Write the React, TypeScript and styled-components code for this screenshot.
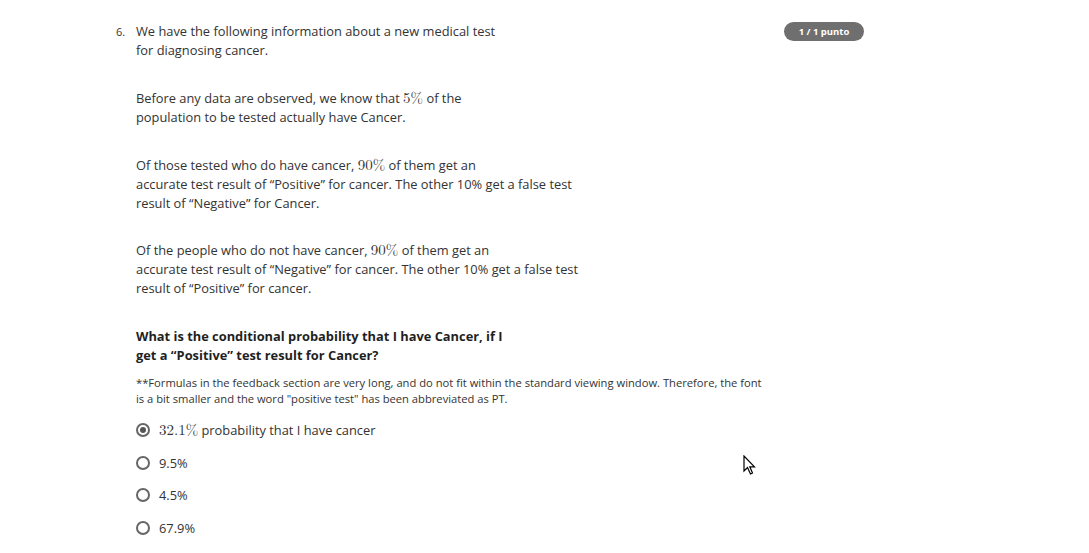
import React from "react";
import styled, { createGlobalStyle } from "styled-components";

const Global = createGlobalStyle`
  html, body { margin: 0; padding: 0; background: #fff; }
  body { font-family: "Open Sans", "DejaVu Sans", sans-serif; color: #333; }
`;

const Page = styled.div`
  position: relative;
  width: 1089px;
  height: 553px;
  overflow: hidden;
  padding: 22px 0 0 116px;
  box-sizing: border-box;
`;

const QuestionRow = styled.div`
  display: flex;
  width: 748px;
  align-items: flex-start;
`;

const Number = styled.div`
  width: 20px;
  flex: none;
  font-size: 11px;
  line-height: 19px;
  color: #333;
`;

const Body = styled.div`
  flex: 1;
`;

const Para = styled.p<{ $gap?: number }>`
  margin: 0 0 ${(p) => p.$gap ?? 29}px;
  font-size: 12.85px;
  line-height: 19px;
  color: #333;
`;

const Bold = styled(Para)`
  font-weight: 700;
  color: #1f1f1f;
  margin-bottom: 10px;
`;

const Note = styled.p`
  margin: 0 0 7px;
  font-size: 11.2px;
  line-height: 16px;
  color: #333;
`;

const Math = styled.span`
  font-family: "Latin Modern Roman", "DejaVu Serif", "Liberation Serif", serif;
  font-size: 15px;
  line-height: 0;
`;

const Badge = styled.div`
  flex: none;
  margin-left: auto;
  background: #6f6f6f;
  color: #fff;
  font-size: 9.5px;
  font-weight: 700;
  height: 19px;
  line-height: 19px;
  width: 80px;
  text-align: center;
  border-radius: 10px;
`;

const Options = styled.div`
  display: flex;
  flex-direction: column;
`;

const Option = styled.label`
  display: flex;
  align-items: center;
  height: 32.6px;
  font-size: 12.85px;
  color: #333;
`;

const Radio = styled.span<{ $checked?: boolean }>`
  width: 14px;
  height: 14px;
  border: 2px solid #666;
  border-radius: 50%;
  box-sizing: border-box;
  margin-right: 9px;
  display: inline-flex;
  align-items: center;
  justify-content: center;
  &::after {
    content: "";
    display: ${(p) => (p.$checked ? "block" : "none")};
    width: 6px;
    height: 6px;
    border-radius: 50%;
    background: #555;
  }
`;

const Cursor = styled.svg`
  position: absolute;
  left: 743px;
  top: 455px;
`;

export default function App() {
  return (
    <Page>
      <Global />
      <QuestionRow>
        <Number>6.</Number>
        <Body>
          <Para>
            We have the following information about a new medical test
            <br />
            for diagnosing cancer.
          </Para>
          <Para>
            Before any data are observed, we know that <Math>5%</Math> of the
            <br />
            population to be tested actually have Cancer.
          </Para>
          <Para $gap={28}>
            Of those tested who do have cancer, <Math>90%</Math> of them get an
            <br />
            accurate test result of “Positive” for cancer. The other 10% get a false test
            <br />
            result of “Negative” for Cancer.
          </Para>
          <Para>
            Of the people who do not have cancer, <Math>90%</Math> of them get an
            <br />
            accurate test result of “Negative” for cancer. The other 10% get a false test
            <br />
            result of “Positive” for cancer.
          </Para>
          <Bold>
            What is the conditional probability that I have Cancer, if I
            <br />
            get a “Positive” test result for Cancer?
          </Bold>
          <Note>
            **Formulas in the feedback section are very long, and do not fit within the standard viewing window. Therefore, the font
            <br />
            is a bit smaller and the word "positive test" has been abbreviated as PT.
          </Note>
          <Options>
            <Option>
              <Radio $checked />
              <span>
                <Math>32.1%</Math> probability that I have cancer
              </span>
            </Option>
            <Option>
              <Radio />
              <span>9.5%</span>
            </Option>
            <Option>
              <Radio />
              <span>4.5%</span>
            </Option>
            <Option>
              <Radio />
              <span>67.9%</span>
            </Option>
          </Options>
        </Body>
        <Badge>1 / 1 punto</Badge>
      </QuestionRow>
      <Cursor width="14" height="20" viewBox="0 0 14 20">
        <path
          d="M1 1 L1 16 L4.5 12.5 L7.5 19 L9.5 18 L6.8 11.8 L11.5 11.8 Z"
          fill="#fff"
          stroke="#000"
          strokeWidth="1.2"
          strokeLinejoin="miter"
        />
      </Cursor>
    </Page>
  );
}
